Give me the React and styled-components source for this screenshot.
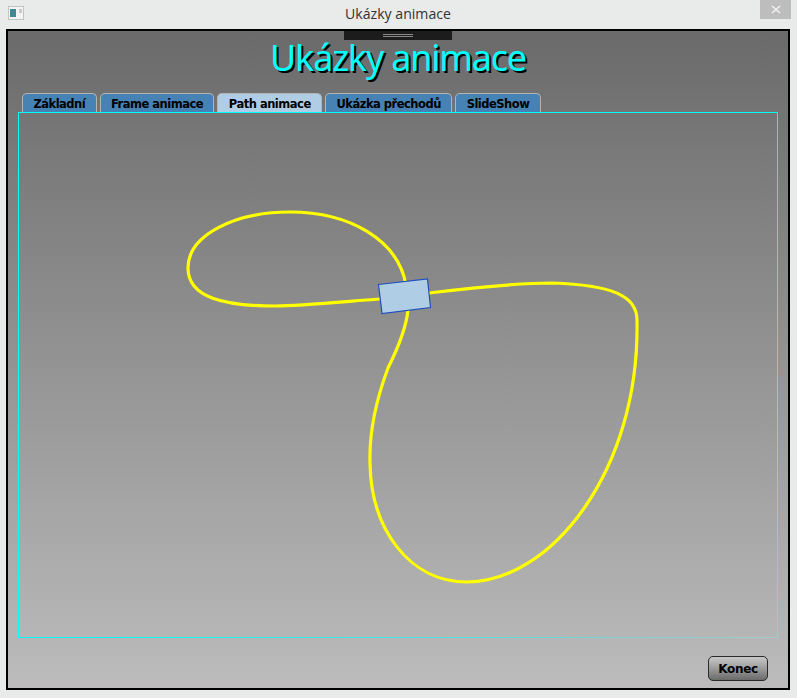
import React from "react";
import styled, { createGlobalStyle } from "styled-components";

const Global = createGlobalStyle`
  html, body { margin: 0; padding: 0; background: #e9ebea; }
  body { width: 797px; height: 698px; overflow: hidden; }
`;

const Page = styled.div`
  width: 797px;
  height: 698px;
  display: flex;
  flex-direction: column;
  background: #e9ebea;
`;

const TitleBar = styled.header`
  height: 29px;
  flex: none;
  display: grid;
  grid-template-columns: 1fr auto 1fr;
  align-items: start;
  padding: 0 6px 0 5px;
  box-sizing: border-box;
`;

const AppIcon = styled.svg`
  width: 16px;
  height: 14px;
  margin: 6px 0 0 3px;
  display: block;
`;

const Caption = styled.div`
  font-family: "Open Sans", "Noto Sans", sans-serif;
  font-size: 14.1px;
  line-height: 28px;
  color: #333;
`;

const CloseButton = styled.div`
  justify-self: end;
  width: 31px;
  height: 19px;
  background: #bdbdbd;
  display: flex;
  align-items: center;
  justify-content: center;
`;

const Window = styled.main`
  flex: none;
  position: relative;
  width: 784px;
  height: 661px;
  margin-left: 6px;
  box-sizing: border-box;
  border: 2px solid #000;
  background: linear-gradient(to bottom, #6a6a6a 0%, #bcbcbc 100%);
  display: flex;
  flex-direction: column;
`;

const Handle = styled.div`
  position: absolute;
  left: 336px;
  top: 0;
  width: 108px;
  height: 9px;
  background: #1c1c1c;
  &::after {
    content: "";
    position: absolute;
    left: 39px;
    top: 3px;
    width: 30px;
    height: 3px;
    box-sizing: border-box;
    border-top: 1px solid #8a8a8a;
    border-bottom: 1px solid #8a8a8a;
  }
`;

const Heading = styled.h1`
  height: 62px;
  flex: none;
  margin: 0;
  text-align: center;
  font-family: "Noto Sans", sans-serif;
  font-weight: 400;
  font-size: 36px;
  line-height: 54px;
  letter-spacing: -1.2px;
  color: #00ffff;
  text-shadow: 2px 2px 0 #000;
`;

const TabStrip = styled.nav`
  height: 19px;
  flex: none;
  display: flex;
  gap: 3px;
  padding-left: 14px;
`;

const Tab = styled.div`
  box-sizing: border-box;
  height: 19px;
  padding: 0 10.4px;
  border: 1px solid #b4b4b4;
  border-bottom: none;
  border-radius: 5px 5px 0 0;
  background: ${(p) => (p.$active ? "#afcde4" : "#4682b4")};
  color: #000;
  font-family: "DejaVu Sans", sans-serif;
  font-weight: 700;
  font-size: 11.5px;
  letter-spacing: -0.5px;
  line-height: 20px;
  white-space: nowrap;
`;

const Frame = styled.section`
  flex: none;
  width: 760px;
  height: 526px;
  margin-left: 10px;
  box-sizing: border-box;
  border: 1px solid;
  border-image: linear-gradient(to bottom right, #00ffff 0%, #00ffff 55%, #a4c8c8 100%) 1;
`;

const Canvas = styled.svg`
  display: block;
  width: 100%;
  height: 100%;
`;

const Footer = styled.footer`
  flex: 1;
  display: flex;
  justify-content: flex-end;
  align-items: flex-start;
  padding: 18px 20px 0 0;
`;

const Button = styled.button`
  box-sizing: border-box;
  width: 60px;
  height: 25px;
  padding: 0;
  border: 1px solid #2a2a2a;
  border-radius: 5px;
  background: linear-gradient(to bottom, #c8c8c8 0%, #a0a0a0 45%, #6a6a6a 100%);
  color: #000;
  font-family: "DejaVu Sans", sans-serif;
  font-weight: 700;
  font-size: 12px;
  letter-spacing: -0.3px;
`;

const tabs = ["Základní", "Frame animace", "Path animace", "Ukázka přechodů", "SlideShow"];

const track =
  "M408 310 C406 330 396 352 388 368 C378 395 369 430 370 463 C371 530 410 582 467 582 C550 582 640 472 637 320 C637 295 610 285 553 283 C515 283 470 288 429 293 L379 299 C340 302 300 306 275 306 C225 306 188 298 188 268 C188 235 235 212 290 212 C350 212 398 240 406 285 L408 310";

export default function App() {
  return (
    <Page>
      <Global />
      <TitleBar>
        <AppIcon viewBox="0 0 16 14">
          <rect x="0.5" y="0.5" width="15" height="13" fill="#f4f4f4" stroke="#c4c4c4" />
          <rect x="2" y="3" width="6" height="8" fill="#3f8a92" />
          <rect x="11" y="3" width="3" height="4" fill="#c9c9c9" />
        </AppIcon>
        <Caption>Ukázky animace</Caption>
        <CloseButton>
          <svg width="10" height="9" viewBox="0 0 10 9">
            <path d="M1 1 L9 8 M9 1 L1 8" stroke="#f2f2f2" strokeWidth="1.5" fill="none" />
          </svg>
        </CloseButton>
      </TitleBar>
      <Window>
        <Handle />
        <Heading>Ukázky animace</Heading>
        <TabStrip>
          {tabs.map((t) => (
            <Tab key={t} $active={t === "Path animace"}>{t}</Tab>
          ))}
        </TabStrip>
        <Frame>
          <Canvas viewBox="19 113 758 524">
            <path d={track} fill="none" stroke="#ffff00" strokeWidth="3.2" />
            <polygon points="378.5,284.5 427.5,279 430.5,307.5 382,313.5" fill="#afcde4" stroke="#1f4fbf" strokeWidth="1.2" />
          </Canvas>
        </Frame>
        <Footer>
          <Button>Konec</Button>
        </Footer>
      </Window>
    </Page>
  );
}
